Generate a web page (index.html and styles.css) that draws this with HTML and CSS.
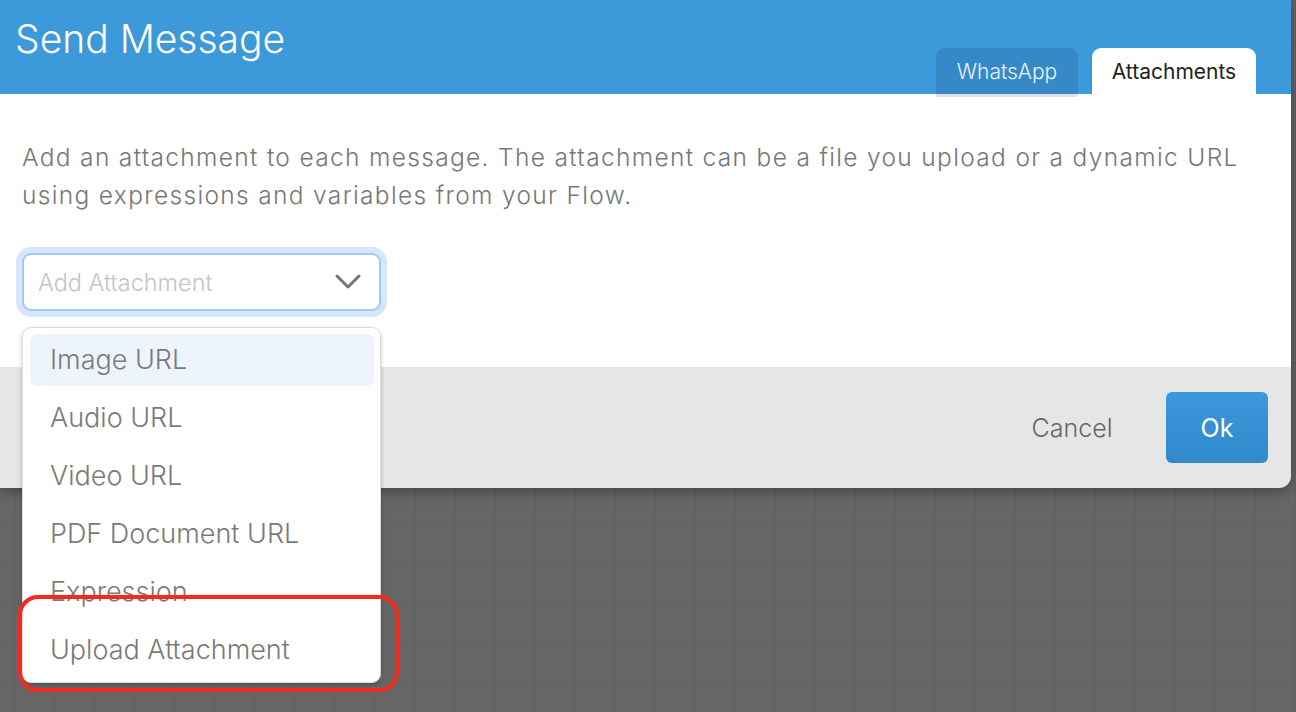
FILE: index.html
```html
<!DOCTYPE html>
<html lang="en">
<head>
<meta charset="utf-8">
<title>Send Message</title>
<link rel="stylesheet" href="styles.css">
</head>
<body>
<div class="canvas">
  <div class="dialog">
    <header class="header">
      <h1 class="title">Send Message</h1>
      <nav class="tabs">
        <div class="tab tab-inactive">WhatsApp</div>
        <div class="tab tab-active">Attachments</div>
      </nav>
    </header>
    <section class="content">
      <p class="intro">Add an attachment to each message. The attachment can be a file you upload or a dynamic URL using expressions and variables from your Flow.</p>
      <div class="select-area">
        <div class="select">
          <span class="placeholder">Add Attachment</span>
          <svg class="chevron" width="26" height="16" viewBox="0 0 26 16"><path d="M2 2 L13 13 L24 2" fill="none" stroke="#757575" stroke-width="3" stroke-linecap="round" stroke-linejoin="round"/></svg>
        </div>
        <ul class="menu">
          <li class="menu-item active">Image URL</li>
          <li class="menu-item">Audio URL</li>
          <li class="menu-item">Video URL</li>
          <li class="menu-item">PDF Document URL</li>
          <li class="menu-item">Expression</li>
          <li class="menu-item">Upload Attachment</li>
        </ul>
      </div>
    </section>
    <footer class="footer">
      <button class="btn-cancel">Cancel</button>
      <button class="btn-ok">Ok</button>
    </footer>
  </div>
  <div class="annotation"></div>
</div>
</body>
</html>
```

FILE: styles.css
```css
* { box-sizing: border-box; }
html, body { margin: 0; padding: 0; }
body {
  font-family: Inter, Roboto, "Liberation Sans", Arial, sans-serif;
  background: #656565;
}
.canvas {
  position: relative;
  width: 1296px;
  height: 712px;
  overflow: hidden;
  background-color: #666666;
  background-image:
    linear-gradient(to right, #59616d 1px, transparent 1px),
    linear-gradient(to bottom, #59616d 1px, transparent 1px);
  background-size: 40px 40px;
  background-position: 15px 3px;
}
.dialog {
  position: relative;
  width: 1291px;
  border-radius: 0 0 12px 0;
  box-shadow: 0 3px 14px rgba(0,0,0,0.35);
}
.header {
  position: relative;
  z-index: 1;
  height: 94px;
  background: #3c99da;
  display: flex;
  justify-content: space-between;
  align-items: flex-end;
  padding-left: 15px;
  padding-right: 35px;
}
.title {
  align-self: flex-start;
  margin: 0;
  padding-top: 16px;
  font-size: 39px;
  line-height: 46px;
  font-weight: 300;
  color: #fff;
}
.tabs {
  display: flex;
  gap: 14px;
}
.tab {
  height: 46px;
  line-height: 48px;
  font-size: 21px;
  font-weight: 300;
  text-align: center;
  border-radius: 9px 9px 0 0;
}
.tab-inactive {
  width: 142px;
  background: #3689c7;
  color: #eaf3fb;
  box-shadow: 0 3px 0 #e3e3e3;
}
.tab-active {
  width: 164px;
  background: #fff;
  color: #222;
  font-weight: 400;
}
.content {
  height: 273px;
  background: #fff;
  padding: 44px 30px 0 22px;
}
.intro {
  margin: 0;
  font-size: 24.5px;
  line-height: 38px;
  font-weight: 300;
  letter-spacing: 1.33px;
  color: #777;
}
.select-area {
  position: relative;
  z-index: 2;
  width: 359px;
  margin-top: 39px;
}
.select {
  height: 58px;
  border: 2px solid #a3c6f7;
  border-radius: 9px;
  box-shadow: 0 0 0 6px #d6e7fd;
  background: #fff;
  display: flex;
  align-items: center;
  justify-content: space-between;
  padding: 0 18px 0 14px;
}
.placeholder {
  font-size: 23.5px;
  font-weight: 300;
  color: #c4c4c4;
}
.chevron { display: block; }
.menu {
  position: absolute;
  top: 74px;
  left: 0;
  width: 359px;
  margin: 0;
  padding: 6px 6px 6px 7px;
  list-style: none;
  background: #fff;
  border: 1px solid #dcdcdc;
  border-radius: 9px;
  box-shadow: 0 2px 5px rgba(0,0,0,0.2);
  display: flex;
  flex-direction: column;
  gap: 6px;
}
.menu-item {
  height: 52px;
  line-height: 52px;
  padding-left: 20px;
  font-size: 27px;
  font-weight: 300;
  color: #7a7a7a;
  border-radius: 7px;
}
.menu-item.active { background: #edf4fe; }
.footer {
  height: 121px;
  background: #e6e6e6;
  border-radius: 0 0 12px 0;
  display: flex;
  justify-content: flex-end;
  align-items: center;
  padding-right: 23px;
}
.btn-cancel {
  width: 120px;
  margin-right: 34px;
  background: none;
  border: none;
  font-family: inherit;
  font-size: 25px;
  font-weight: 300;
  color: #666;
  padding: 0;
}
.btn-ok {
  width: 102px;
  height: 71px;
  border: none;
  border-radius: 6px;
  background: linear-gradient(#3b98da, #3189cc);
  color: #fff;
  font-family: inherit;
  font-size: 25px;
  font-weight: 400;
}
.annotation {
  position: absolute;
  left: 18px;
  top: 595px;
  width: 381px;
  height: 97px;
  border: 4px solid #f42a1e;
  border-radius: 20px;
  z-index: 5;
}
```
